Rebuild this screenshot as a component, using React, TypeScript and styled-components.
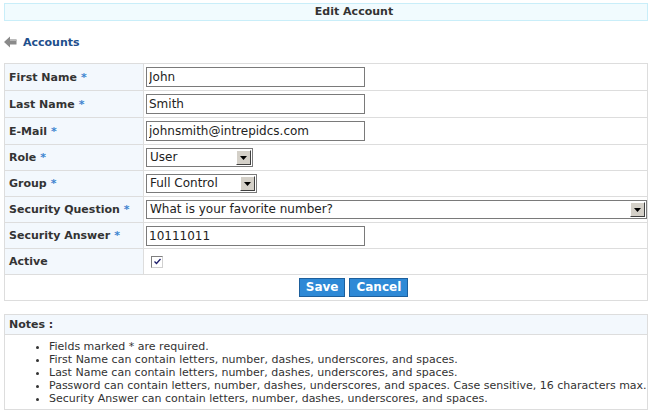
import React from "react";
import styled, { createGlobalStyle } from "styled-components";

const GlobalStyle = createGlobalStyle`
  html, body { margin: 0; padding: 0; background: #ffffff; }
  body { font-family: "DejaVu Sans", Verdana, sans-serif; color: #333333; }
`;

const Page = styled.div`
  padding: 3px 4px 0 4px;
  width: 644px;
`;

const Header = styled.div`
  height: 16px;
  border: 1px solid #c9eef9;
  background: #f1fbfe;
  font-size: 11px;
  font-weight: bold;
  line-height: 16px;
  text-align: center;
  padding-left: 56px;
  color: #333;
`;

const BackRow = styled.div`
  display: flex;
  align-items: center;
  gap: 6px;
  height: 20px;
  margin-top: 11px;
  margin-bottom: 11px;
`;

const BackLink = styled.a`
  font-size: 11px;
  font-weight: bold;
  color: #1e4f8c;
  text-decoration: none;
`;

const FormTable = styled.table`
  width: 644px;
  border-collapse: collapse;
  border: 1px solid #dddddd;
  font-size: 11px;
`;

const Row = styled.tr<{ $h: number }>`
  height: ${(p) => p.$h}px;
`;

const LabelCell = styled.td`
  width: 135px;
  background: #f3f8fd;
  border: 1px solid #dddddd;
  padding: 0 0 0 4px;
  font-weight: bold;
  color: #333;
  white-space: nowrap;
`;

const Star = styled.span`
  color: #3d85d0;
  margin-left: 4px;
`;

const FieldCell = styled.td`
  border: 1px solid #dddddd;
  padding: 0 0 0 2px;
  background: #ffffff;
`;

const TextInput = styled.input`
  box-sizing: border-box;
  width: 219px;
  height: 20px;
  border: 1px solid #7a7a7a;
  padding: 0 2px;
  font-family: "DejaVu Sans", Verdana, sans-serif;
  font-size: 12px;
  color: #222;
  display: block;
  outline: none;
`;

const SelectBox = styled.div<{ $w: number }>`
  box-sizing: border-box;
  width: ${(p) => p.$w}px;
  height: 19px;
  border: 1px solid #7a7a7a;
  display: flex;
  align-items: stretch;
  font-size: 12px;
  color: #222;
  background: #fff;
`;

const SelectText = styled.div`
  flex: 1;
  padding-left: 3px;
  line-height: 17px;
  white-space: nowrap;
  overflow: hidden;
`;

const SelectButton = styled.div`
  width: 15px;
  margin: 1px;
  background: #d4d0c8;
  border-top: 1px solid #ffffff;
  border-left: 1px solid #ffffff;
  border-right: 1px solid #404040;
  border-bottom: 1px solid #404040;
  box-sizing: border-box;
  display: flex;
  align-items: center;
  justify-content: center;
`;

const CheckBox = styled.div`
  box-sizing: border-box;
  width: 12px;
  height: 12px;
  margin-left: 5px;
  border: 1px solid #7f7f7f;
  border-right-color: #d0d0d0;
  border-bottom-color: #d0d0d0;
  background: #fff;
  display: flex;
  align-items: center;
  justify-content: center;
`;

const ButtonCell = styled.td`
  border: 1px solid #dddddd;
  text-align: center;
  padding-left: 56px;
`;

const ButtonGroup = styled.div`
  display: inline-flex;
  gap: 4px;
  vertical-align: middle;
`;

const Button = styled.button`
  height: 19px;
  padding: 0 6px;
  background: #2e89d6;
  border: 1px solid #1d5f9c;
  color: #ffffff;
  font-family: "DejaVu Sans", Verdana, sans-serif;
  font-size: 12px;
  font-weight: bold;
  line-height: 17px;
  cursor: pointer;
`;

const Notes = styled.div`
  margin-top: 13px;
  border: 1px solid #dddddd;
  width: 642px;
`;

const NotesHeader = styled.div`
  height: 19px;
  line-height: 19px;
  background: #f3f8fd;
  border-bottom: 1px solid #dddddd;
  padding-left: 4px;
  font-size: 11px;
  font-weight: bold;
  color: #333;
`;

const NotesList = styled.ul`
  margin: 0;
  padding: 5px 0 4px 44px;
  font-size: 11px;
  line-height: 13px;
  color: #333;
  white-space: nowrap;
`;

const Arrow = () => (
  <svg width="13" height="12" viewBox="0 0 13 12">
    <path d="M0 6 L6 0.5 V3.5 H12.5 V8.5 H6 V11.5 Z" fill="#8a8a8a" />
    <path d="M6 3.5 H12.5 V5 H6 Z" fill="#b5b5b5" />
  </svg>
);

const Triangle = () => (
  <svg width="7" height="4" viewBox="0 0 7 4">
    <path d="M0 0 H7 L3.5 4 Z" fill="#000" />
  </svg>
);

const Check = () => (
  <svg width="9" height="9" viewBox="0 0 9 9">
    <path d="M1.5 4.5 L3.5 6.5 L7.5 2" stroke="#1d1d6b" strokeWidth="1.3" fill="none" />
  </svg>
);

const Select: React.FC<{ w: number; value: string }> = ({ w, value }) => (
  <SelectBox $w={w}>
    <SelectText>{value}</SelectText>
    <SelectButton>
      <Triangle />
    </SelectButton>
  </SelectBox>
);

const Label: React.FC<{ text: string; req?: boolean }> = ({ text, req }) => (
  <LabelCell>
    {text}
    {req && <Star>*</Star>}
  </LabelCell>
);

const notes = [
  "Fields marked * are required.",
  "First Name can contain letters, number, dashes, underscores, and spaces.",
  "Last Name can contain letters, number, dashes, underscores, and spaces.",
  "Password can contain letters, number, dashes, underscores, and spaces. Case sensitive, 16 characters max.",
  "Security Answer can contain letters, number, dashes, underscores, and spaces.",
];

export default function App() {
  return (
    <>
      <GlobalStyle />
      <Page>
        <Header>Edit Account</Header>
        <BackRow>
          <Arrow />
          <BackLink href="#">Accounts</BackLink>
        </BackRow>
        <FormTable>
          <tbody>
            <Row $h={27}>
              <Label text="First Name" req />
              <FieldCell>
                <TextInput defaultValue="John" />
              </FieldCell>
            </Row>
            <Row $h={27}>
              <Label text="Last Name" req />
              <FieldCell>
                <TextInput defaultValue="Smith" />
              </FieldCell>
            </Row>
            <Row $h={27}>
              <Label text="E-Mail" req />
              <FieldCell>
                <TextInput defaultValue="johnsmith@intrepidcs.com" />
              </FieldCell>
            </Row>
            <Row $h={26}>
              <Label text="Role" req />
              <FieldCell>
                <Select w={107} value="User" />
              </FieldCell>
            </Row>
            <Row $h={26}>
              <Label text="Group" req />
              <FieldCell>
                <Select w={111} value="Full Control" />
              </FieldCell>
            </Row>
            <Row $h={26}>
              <Label text="Security Question" req />
              <FieldCell>
                <Select w={501} value="What is your favorite number?" />
              </FieldCell>
            </Row>
            <Row $h={26}>
              <Label text="Security Answer" req />
              <FieldCell>
                <TextInput defaultValue="10111011" />
              </FieldCell>
            </Row>
            <Row $h={26}>
              <Label text="Active" />
              <FieldCell>
                <CheckBox>
                  <Check />
                </CheckBox>
              </FieldCell>
            </Row>
            <Row $h={26}>
              <ButtonCell colSpan={2}>
                <ButtonGroup>
                  <Button>Save</Button>
                  <Button>Cancel</Button>
                </ButtonGroup>
              </ButtonCell>
            </Row>
          </tbody>
        </FormTable>
        <Notes>
          <NotesHeader>Notes :</NotesHeader>
          <NotesList>
            {notes.map((n) => (
              <li key={n}>{n}</li>
            ))}
          </NotesList>
        </Notes>
      </Page>
    </>
  );
}
